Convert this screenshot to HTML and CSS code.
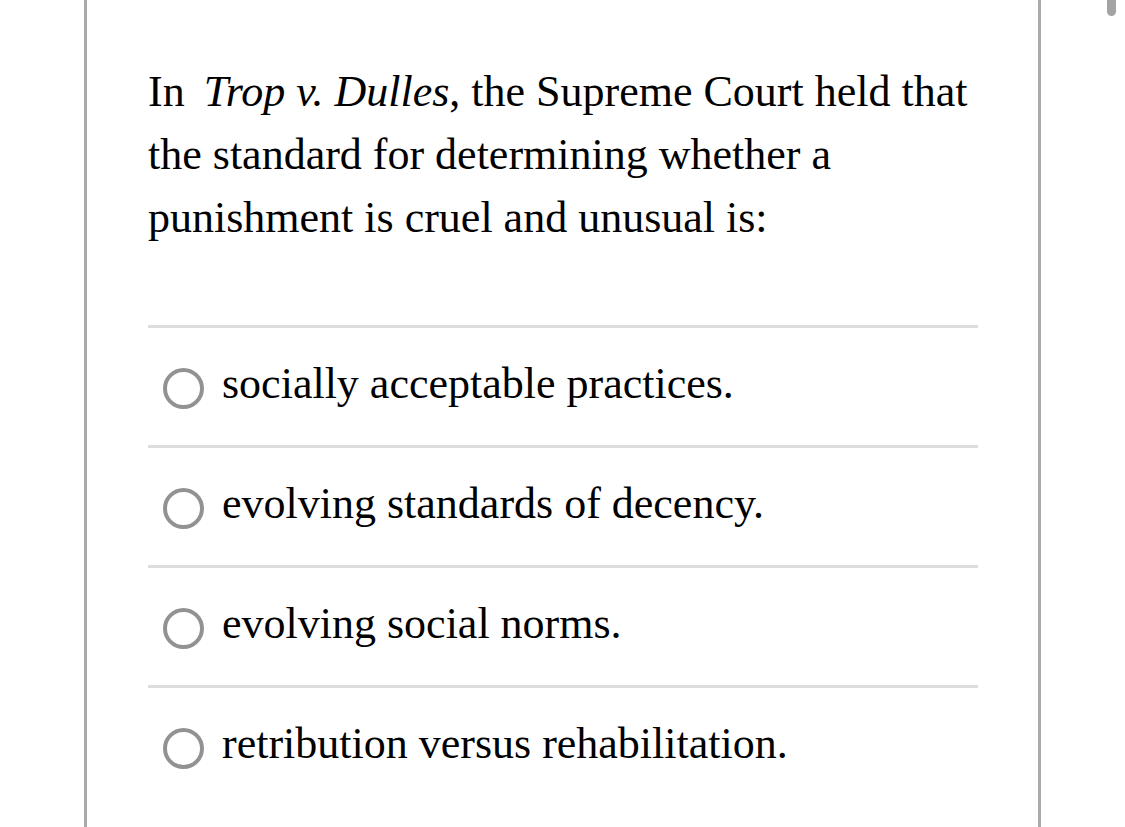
FILE: index.html
```html
<!DOCTYPE html>
<html>
<head>
<meta charset="utf-8">
<link rel="stylesheet" href="styles.css">
</head>
<body>
<div class="page">
  <div class="card">
    <p class="question">In&nbsp; <i class="case">Trop v. Dulles</i>, the Supreme Court held that the standard for determining whether a punishment is cruel and unusual is:</p>
    <ul class="options">
      <li class="option"><span class="radio"></span><span class="label">socially acceptable practices.</span></li>
      <li class="option"><span class="radio"></span><span class="label">evolving standards of decency.</span></li>
      <li class="option"><span class="radio"></span><span class="label">evolving social norms.</span></li>
      <li class="option"><span class="radio"></span><span class="label">retribution versus rehabilitation.</span></li>
    </ul>
  </div>
  <div class="scroll-thumb"></div>
</div>
</body>
</html>
```
FILE: styles.css
```css
html, body {
  margin: 0;
  padding: 0;
  background: #ffffff;
}
body {
  font-family: "Liberation Serif", "Times New Roman", serif;
  color: #000000;
}
.page {
  position: relative;
  width: 1125px;
  height: 827px;
  overflow: hidden;
  padding-left: 84px;
  box-sizing: border-box;
}
.card {
  width: 957px;
  height: 827px;
  box-sizing: border-box;
  border-left: 3px solid #aaaaaa;
  border-right: 3px solid #aaaaaa;
  padding: 60px 60px 0 61px;
}
.question {
  margin: 0;
  font-size: 44px;
  line-height: 63px;
  width: 830px;
}
.case {
  font-style: italic;
  margin-left: -3px;
}
.options {
  list-style: none;
  margin: 76px 0 0 0;
  padding: 0;
}
.option {
  display: flex;
  align-items: center;
  height: 120px;
  box-sizing: border-box;
  border-top: 3px solid #dddddd;
  font-size: 44px;
}
.radio {
  width: 41px;
  height: 41px;
  box-sizing: border-box;
  border: 4px solid #929292;
  border-radius: 50%;
  margin: 3px 18px 0 15px;
  flex: none;
}
.label {
  margin-bottom: 7px;
}
.scroll-thumb {
  position: absolute;
  top: -10px;
  left: 1107px;
  width: 9px;
  height: 26px;
  border-radius: 5px;
  background: #a4a4a4;
}
```
